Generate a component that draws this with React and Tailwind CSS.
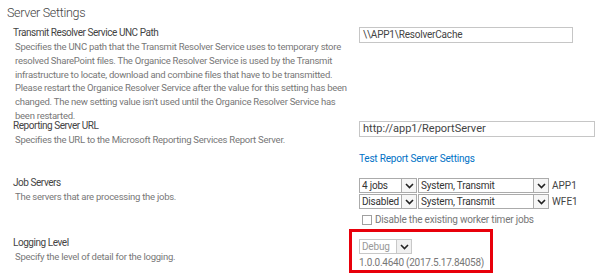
import React from 'react';

const Chevron = () => (
  <svg width="9" height="6" viewBox="0 0 9 6" className="block">
    <path d="M1 1 L4.5 4.5 L8 1" fill="none" stroke="#222" strokeWidth="1.6" />
  </svg>
);

const Select = ({ value, width, disabled }) => (
  <div
    className={`flex h-[15px] border ${disabled ? 'border-[#c8c8c8]' : 'border-[#ababab]'} bg-white`}
    style={{ width }}
  >
    <span
      className={`flex-1 pl-[2px] text-[10px] tracking-[-0.2px] leading-[13px] whitespace-nowrap overflow-hidden ${
        disabled ? 'text-[#999]' : 'text-[#333]'
      }`}
    >
      {value}
    </span>
    <span
      className={`w-[15px] flex items-center justify-center border-l ${
        disabled ? 'border-[#c8c8c8] bg-[#f0f0f0]' : 'border-[#ababab] bg-[#f6f6f6]'
      }`}
    >
      <Chevron />
    </span>
  </div>
);

const Section = ({ title, lines, children, className, descLeading = 'leading-[14px]' }) => (
  <div className={`flex ${className}`}>
    <div className="w-[346px] pl-[13px]">
      <div className="text-[10px] tracking-[-0.45px] leading-[14px] text-[#444]">{title}</div>
      <div className={`pl-[2px] text-[9.5px] tracking-[-0.25px] ${descLeading} text-[#777]`}>
        {lines.map((l) => (
          <div key={l} className="whitespace-nowrap">{l}</div>
        ))}
      </div>
    </div>
    <div className="flex-1 pl-[13px]">{children}</div>
  </div>
);

export default function App() {
  return (
    <div
      className="w-[600px] h-[279px] bg-white overflow-hidden"
      style={{ fontFamily: 'Roboto, "Open Sans", sans-serif' }}
    >
      {/* Heading */}
      <div className="pl-[7px] pt-[3px] h-[26px] text-[12.5px] tracking-[-0.3px] leading-[20px] font-light text-[#444]">
        Server Settings
      </div>

      <Section
        className="h-[93px]"
        descLeading="leading-[13.8px]"
        title="Transmit Resolver Service UNC Path"
        lines={[
          'Specifies the UNC path that the Transmit Resolver Service uses to temporary store',
          'resolved SharePoint files. The Organice Resolver Service is used by the Transmit',
          'infrastructure to locate, download and combine files that have to be transmitted.',
          'Please restart the Organice Resolver Service after the value for this setting has been',
          "changed. The new setting value isn't used until the Organice Resolver Service has",
          'been restarted.',
        ]}
      >
        <div className="mt-[1px] w-[214px] h-[16px] border border-[#c6c6c6] pl-[3px] text-[10px] tracking-[-0.2px] leading-[14px] text-[#444]">
          \\APP1\ResolverCache
        </div>
      </Section>

      <Section
        className="h-[57px]"
        title="Reporting Server URL"
        lines={['Specifies the URL to the Microsoft Reporting Services Report Server.']}
      >
        <div className="mt-[2px] w-[236px] h-[16px] border border-[#c6c6c6] pl-[3px] text-[11px] leading-[14px] text-[#444]">
          http://app1/ReportServer
        </div>
        <div className="mt-[15px] text-[10px] tracking-[-0.2px] leading-[14px] text-[#0072c6]">
          Test Report Server Settings
        </div>
      </Section>

      <Section
        className="h-[60px]"
        title="Job Servers"
        lines={['The servers that are processing the jobs.']}
      >
        <div className="mt-[2px] flex flex-col gap-[1px]">
          <div className="flex items-center gap-[1px]">
            <Select value="4 jobs" width={58} />
            <Select value="System, Transmit" width={131} />
            <span className="ml-[2px] text-[10px] leading-[14px] text-[#444]">APP1</span>
          </div>
          <div className="flex items-center gap-[1px]">
            <Select value="Disabled" width={58} />
            <Select value="System, Transmit" width={131} />
            <span className="ml-[2px] text-[10px] leading-[14px] text-[#444]">WFE1</span>
          </div>
          <div className="flex items-center gap-[3px] pl-[3px] mt-[4px]">
            <span className="w-[10px] h-[10px] border border-[#a0a0a0] bg-white" />
            <span className="text-[10px] tracking-[-0.2px] leading-[12px] text-[#777]">
              Disable the existing worker timer jobs
            </span>
          </div>
        </div>
      </Section>

      <Section title="Logging Level" lines={['Specify the level of detail for the logging.']}>
        <div className="-ml-[10px] -mt-[7px] w-[144px] h-[44px] border-[3px] border-[#e8000b] pl-[7px] pt-[7px]">
          <Select value="Debug" width={53} disabled />
          <div className="mt-[2px] text-[10px] tracking-[-0.25px] leading-[14px] text-[#777] whitespace-nowrap">
            1.0.0.4640 (2017.5.17.84058)
          </div>
        </div>
      </Section>
    </div>
  );
}
